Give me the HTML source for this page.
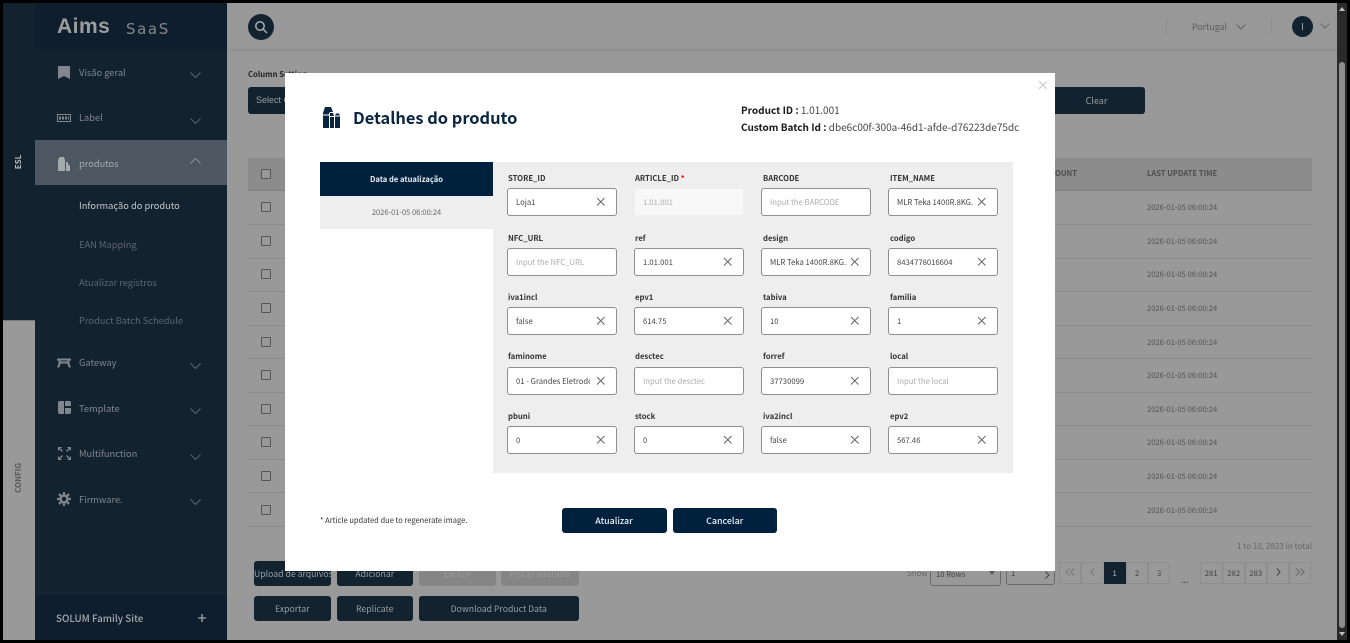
<!DOCTYPE html>
<html><head><meta charset="utf-8"><style>
html,body{margin:0;padding:0;width:1350px;height:643px;overflow:hidden;background:#000}
body{position:relative;font-family:"Liberation Sans","Noto Sans CJK KR",sans-serif}
*{box-sizing:border-box}
#p,#p *{font-family:"Noto Sans CJK KR","Liberation Sans",sans-serif}
.b{position:absolute}
.t{position:absolute;white-space:nowrap;line-height:14px}
.s{font-size:9.3px;color:#7f868d}
.d{font-size:7.6px;color:#535353;left:1147px;margin-top:1px}
.cb{position:absolute;left:261px;width:10px;height:10px;border:1.3px solid #555;border-radius:1px;background:#999}
.ln{position:absolute;left:248px;width:1064px;height:1px;background:#8c8c8c}
.btn{position:absolute;height:25px;border-radius:3px;background:#12222f;color:#9a9fa3;font-size:8.7px;text-align:center;line-height:25px;white-space:nowrap;overflow:hidden}
.dis{background:#858585;color:#9a9a9a}
.pg{position:absolute;top:562px;width:22.4px;height:22.4px;border:1px solid #8e8e8e;font-size:7.7px;color:#444;text-align:center;line-height:21px}
.l{position:absolute;font-size:7.7px;font-weight:700;color:#333;white-space:nowrap;line-height:12px;margin-top:1px}
.i{position:absolute;width:110px;height:28px;background:#fff;border:1px solid #8f8f8f;border-radius:3px;font-size:7.7px;line-height:27px;padding-left:8px;color:#444;white-space:nowrap;overflow:hidden}
.ph{color:#adadad}
.m{position:absolute;height:25px;border-radius:3px;background:#00213e;color:#e8edf1;font-size:8.9px;font-weight:500;text-align:center;line-height:25px}
</style></head><body>
<div id="p">
<div class="b" style="left:3px;top:3px;width:1334px;height:637px;background:#999"></div>
<!-- rail -->
<div class="b" style="left:3px;top:3px;width:32px;height:317px;background:#12222f"></div>
<div class="b" style="left:3px;top:320px;width:32px;height:320px;background:#999;border-top:1px solid #777"></div>
<div class="t" style="left:11px;top:155px;font-size:8px;font-weight:700;color:#b9bdc1;transform:rotate(-90deg);width:16px;text-align:center">ESL</div>
<div class="t" style="left:5px;top:472px;width:28px;text-align:center;font-size:8px;font-weight:700;color:#595959;transform:rotate(-90deg)">CONFIG</div>
<!-- sidebar -->
<div class="b" style="left:35px;top:3px;width:192px;height:637px;background:#12222f"></div>
<div class="b" style="left:35px;top:3px;width:192px;height:46px;background:#0f1e2c"></div>
<div class="b" style="left:35px;top:140px;width:192px;height:45px;background:#4d5761"></div>
<div class="b" style="left:35px;top:595px;width:192px;height:45px;background:#0f1e2c"></div>
<!-- logo -->
<div class="t" style="left:57px;top:15px;font-family:'Liberation Sans',sans-serif;font-size:21px;font-weight:700;color:#9b9d9f;line-height:24px;letter-spacing:.5px">Aims</div>
<div class="t" style="left:126px;top:18px;font-family:'DejaVu Sans',sans-serif;font-size:15px;color:#83878b;line-height:22px;letter-spacing:1.600px">SaaS</div>
<!-- sidebar items -->
<svg class="b" style="left:58px;top:66px" width="12" height="13"><path d="M0 0H12V13L6 10L0 13Z" fill="#7f868d"/></svg>
<div class="t s" style="left:79px;top:65px">Visão geral</div>
<svg class="b" style="left:57px;top:114px" width="14" height="8"><rect x=".5" y=".5" width="13" height="7" fill="none" stroke="#7f868d"/><path d="M2 4h10" stroke="#7f868d" stroke-dasharray="2 1" stroke-width="3"/></svg>
<div class="t s" style="left:79px;top:110px">Label</div>
<svg class="b" style="left:58px;top:156px" width="12" height="15" viewBox="0 0 12 15"><path d="M0 4L1.500 1H6L7 4V15H0Z" fill="#a4a9ad"/><path d="M8 6H10V8L12 10V15H8Z" fill="#a4a9ad"/></svg>
<div class="t" style="left:79px;top:156px;font-size:9.300px;color:#a4a9ad">produtos</div>
<div class="t" style="left:79px;top:198px;font-size:9.300px;color:#c3c6c9">Informação do produto</div>
<div class="t s" style="left:79px;top:237px;color:#5c6670">EAN Mapping</div>
<div class="t s" style="left:79px;top:275px;color:#5c6670">Atualizar registros</div>
<div class="t s" style="left:79px;top:313px;color:#5c6670">Product Batch Schedule</div>
<svg class="b" style="left:57px;top:358px" width="14" height="10" viewBox="0 0 14 10"><path d="M0 1.500H14M2.500 1V6L1 9.500M11.500 1V6L13 9.500M2 4.500H12" fill="none" stroke="#7f868d" stroke-width="2"/></svg>
<div class="t s" style="left:79px;top:355px">Gateway</div>
<svg class="b" style="left:58px;top:401px" width="13" height="13"><path d="M2 0H6V13H2Q0 13 0 11V2Q0 0 2 0ZM7 0H11Q13 0 13 2V5H7ZM7 7H13V11Q13 13 11 13H7Z" fill="#7f868d"/></svg>
<div class="t s" style="left:79px;top:401px">Template</div>
<svg class="b" style="left:58px;top:447px" width="13" height="13" viewBox="0 0 13 13"><g fill="none" stroke="#7f868d" stroke-width="1.300"><path d="M.5 3.500V.5H3.500M.8.800L4.500 4.500M12.500 3.500V.5H9.500M12.200.800L8.500 4.500M.5 9.500V12.500H3.500M.8 12.200L4.500 8.500M12.500 9.500V12.500H9.500M12.200 12.200L8.500 8.500"/></g></svg>
<div class="t s" style="left:79px;top:446px">Multifunction</div>
<svg class="b" style="left:57px;top:492px" width="14" height="14" viewBox="0 0 14 14"><circle cx="7" cy="7" r="3.500" fill="none" stroke="#7f868d" stroke-width="2.600"/><path d="M7 0V14M0 7H14M2 2L12 12M12 2L2 12" stroke="#7f868d" stroke-width="2.200" stroke-dasharray="2.400 9.500 2.400 0"/></svg>
<div class="t s" style="left:79px;top:491.500px">Firmware.</div>
<svg class="b" style="left:190px;top:72px" width="11" height="6"><path d="M.5.500L5.500 5.500L10.500.500" fill="none" stroke="#5c6670"/></svg>
<svg class="b" style="left:190px;top:118px" width="11" height="6"><path d="M.5.500L5.500 5.500L10.500.500" fill="none" stroke="#5c6670"/></svg>
<svg class="b" style="left:190px;top:158px" width="11" height="6"><path d="M.5 5.500L5.500.500L10.500 5.500" fill="none" stroke="#8a9096"/></svg>
<svg class="b" style="left:190px;top:363px" width="11" height="6"><path d="M.5.500L5.500 5.500L10.500.500" fill="none" stroke="#5c6670"/></svg>
<svg class="b" style="left:190px;top:408px" width="11" height="6"><path d="M.5.500L5.500 5.500L10.500.500" fill="none" stroke="#5c6670"/></svg>
<svg class="b" style="left:190px;top:454px" width="11" height="6"><path d="M.5.500L5.500 5.500L10.500.500" fill="none" stroke="#5c6670"/></svg>
<svg class="b" style="left:190px;top:499px" width="11" height="6"><path d="M.5.500L5.500 5.500L10.500.500" fill="none" stroke="#5c6670"/></svg>
<div class="t" style="left:56px;top:611px;font-size:9.800px;font-weight:500;color:#a4a9ad">SOLUM Family Site</div>
<svg class="b" style="left:198px;top:614px" width="8" height="8"><path d="M4 0V8M0 4H8" stroke="#a4a9ad" stroke-width="1.300"/></svg>
<!-- topbar -->
<div class="b" style="left:227px;top:3px;width:1110px;height:46px;background:#989898;box-shadow:0 1px 3px rgba(0,0,0,.12)"></div>
<div class="b" style="left:248px;top:14px;width:26px;height:26px;border-radius:50%;background:#12222f"></div>
<svg class="b" style="left:254px;top:20px" width="14" height="14"><circle cx="6" cy="6" r="4.200" fill="none" stroke="#a9adb0" stroke-width="1.500"/><path d="M9 9L13 13" stroke="#a9adb0" stroke-width="1.500"/></svg>
<div class="b" style="left:1166px;top:19px;width:1px;height:15px;background:#8e8e8e"></div>
<div class="b" style="left:1271px;top:19px;width:1px;height:15px;background:#8e8e8e"></div>
<div class="t" style="left:1192px;top:20px;font-size:8.800px;color:#5d5d5d">Portugal</div>
<svg class="b" style="left:1236px;top:24px" width="10" height="6"><path d="M.5.500L5 5L9.500.500" fill="none" stroke="#666" stroke-width="1.200"/></svg>
<div class="b" style="left:1292px;top:16px;width:21px;height:21px;border-radius:50%;background:#12222f;color:#a9adb0;font-size:9.500px;text-align:center;line-height:21px">I</div>
<svg class="b" style="left:1320px;top:23px" width="10" height="6"><path d="M.5.500L5 5L9.500.500" fill="none" stroke="#6d6d6d" stroke-width="1.200"/></svg>
<!-- filters -->
<div class="t" style="left:248px;top:68px;font-size:7.700px;font-weight:700;color:#222">Column Setting</div>
<div class="b" style="left:248px;top:87px;width:60px;height:27px;background:#12222f;border-radius:3px"></div>
<div class="t" style="left:256px;top:93px;font-size:9px;color:#9a9fa3;font-family:'Liberation Sans'">Select Column</div>
<div class="btn" style="left:1048px;top:87px;width:97px;height:27px;line-height:27px;font-size:9px">Clear</div>
<!-- table -->
<div class="b" style="left:248px;top:158px;width:1064px;height:33px;background:#8c8c8c;border-bottom:1px solid #7f7f7f"></div>
<div class="t" style="left:1055px;top:167px;font-size:7.600px;font-weight:700;color:#4d4d4d">OUNT</div>
<div class="t" style="left:1147px;top:167px;font-size:7.600px;font-weight:700;color:#4d4d4d">LAST UPDATE TIME</div>
<div class="cb" style="top:169px"></div>
<div class="cb" style="top:202px"></div><div class="cb" style="top:236px"></div><div class="cb" style="top:269px"></div><div class="cb" style="top:303px"></div><div class="cb" style="top:337px"></div><div class="cb" style="top:370px"></div><div class="cb" style="top:404px"></div><div class="cb" style="top:437px"></div><div class="cb" style="top:471px"></div><div class="cb" style="top:505px"></div>
<div class="ln" style="top:224px"></div><div class="ln" style="top:258px"></div><div class="ln" style="top:291px"></div><div class="ln" style="top:325px"></div><div class="ln" style="top:358px"></div><div class="ln" style="top:392px"></div><div class="ln" style="top:425px"></div><div class="ln" style="top:459px"></div><div class="ln" style="top:492px"></div><div class="ln" style="top:526px"></div>
<div class="t d" style="top:200px">2026-01-05 06:00:24</div><div class="t d" style="top:234px">2026-01-05 06:00:24</div><div class="t d" style="top:267px">2026-01-05 06:00:24</div><div class="t d" style="top:301px">2026-01-05 06:00:24</div><div class="t d" style="top:335px">2026-01-05 06:00:24</div><div class="t d" style="top:368px">2026-01-05 06:00:24</div><div class="t d" style="top:402px">2026-01-05 06:00:24</div><div class="t d" style="top:435px">2026-01-05 06:00:24</div><div class="t d" style="top:469px">2026-01-05 06:00:24</div><div class="t d" style="top:503px">2026-01-05 06:00:24</div>
<!-- bottom buttons -->
<div class="btn" style="left:254px;top:561px;width:76.500px">Upload de arquivos</div>
<div class="btn" style="left:336.500px;top:561px;width:76.500px">Adicionar</div>
<div class="btn dis" style="left:419px;top:561px;width:77px">Excluir</div>
<div class="btn dis" style="left:501px;top:561px;width:77.500px">Piscar liderado</div>
<div class="btn" style="left:254px;top:596px;width:76.500px">Exportar</div>
<div class="btn" style="left:336.500px;top:596px;width:76.500px">Replicate</div>
<div class="btn" style="left:419px;top:596px;width:159.500px">Download Product Data</div>
<!-- pagination -->
<div class="t" style="right:38px;top:540px;font-size:8.100px;color:#666">1 to 10, 2823 in total</div>
<div class="t" style="left:907px;top:567px;font-size:7.900px;color:#666">Show</div>
<div class="b" style="left:930px;top:560px;width:70.500px;height:26px;border:1px solid #6a6a6a;border-radius:3px"></div>
<div class="t" style="left:936px;top:568px;font-size:7.700px;color:#444">10 Rows</div>
<svg class="b" style="left:989px;top:571px" width="6" height="4"><path d="M0 0H6L3 4Z" fill="#555"/></svg>
<div class="b" style="left:1006px;top:560px;width:49px;height:24.500px;border:1px solid #6a6a6a;border-radius:3px"></div>
<div class="t" style="left:1011px;top:567px;font-size:7.700px;color:#444">1</div>
<svg class="b" style="left:1045px;top:571px" width="5" height="8"><path d="M.5.500L4 4L.5 7.500" fill="none" stroke="#444"/></svg>
<div class="pg" style="left:1059px;color:#777"><svg width="10" height="8" viewBox="0 0 10 8"><path d="M4.500.500L1 4L4.500 7.500M9 .500L5.500 4L9 7.500" fill="none" stroke="#777"/></svg></div>
<div class="pg" style="left:1081px"><svg width="5" height="8"><path d="M4 .500L1 4L4 7.500" fill="none" stroke="#777"/></svg></div>
<div class="pg" style="left:1103.500px;background:#12222f;color:#b5b9bc;border-color:#12222f">1</div>
<div class="pg" style="left:1126px">2</div>
<div class="pg" style="left:1148px">3</div>
<div class="t" style="left:1181px;top:573px;font-size:9px;color:#444">...</div>
<div class="pg" style="left:1200px">281</div>
<div class="pg" style="left:1222.500px">282</div>
<div class="pg" style="left:1244.500px">283</div>
<div class="pg" style="left:1267px"><svg width="5" height="8"><path d="M1 .500L4 4L1 7.500" fill="none" stroke="#444"/></svg></div>
<div class="pg" style="left:1289px"><svg width="10" height="8" viewBox="0 0 10 8"><path d="M1 .500L4.500 4L1 7.500M5.500 .500L9 4L5.500 7.500" fill="none" stroke="#666"/></svg></div>
<!-- scrollbar -->
<div class="b" style="left:1337px;top:3px;width:10px;height:637px;background:#2a2a2a"></div>
<div class="b" style="left:1339px;top:62px;width:6px;height:566px;background:#8e8e8e;border-radius:3px"></div>
<svg class="b" style="left:1339px;top:7px" width="6" height="4"><path d="M3 0L6 4H0Z" fill="#bdbdbd"/></svg>
<svg class="b" style="left:1339px;top:632px" width="6" height="4"><path d="M0 0H6L3 4Z" fill="#bdbdbd"/></svg>
<!-- modal -->
<div class="b" style="left:285px;top:73px;width:770px;height:498px;background:#fff"></div>
<svg class="b" style="left:1039px;top:81px" width="8" height="8"><path d="M0 0L8 8M8 0L0 8" stroke="#c4c4c4"/></svg>
<svg class="b" style="left:323px;top:107px" width="17" height="21" viewBox="0 0 17 21"><path d="M0 6L2 0H8L10 5H7L5.500 7.500H0Z" fill="#0a2540"/><path d="M0 8.500H6V21H0Z" fill="#0a2540"/><path d="M7 6H10L11 9H7ZM7 10H11V21H7ZM12 9.500H17V21H12ZM12 8.500L13 6.500H16L17 8.500Z" fill="#0a2540"/></svg>
<div class="t" style="left:353px;top:106px;font-size:16.400px;font-weight:700;color:#0a2540;line-height:22px">Detalhes do produto</div>
<div class="t" style="left:741px;top:103px;font-size:10px;font-weight:700;color:#1a1a1a">Product ID : <span style="font-weight:400;color:#444">1.01.001</span></div>
<div class="t" style="left:741px;top:120px;font-size:10px;font-weight:700;color:#1a1a1a">Custom Batch Id : <span style="font-weight:400;color:#444">dbe6c00f-300a-46d1-afde-d76223de75dc</span></div>
<div class="b" style="left:320px;top:162px;width:173px;height:34px;background:#00213e;color:#e8edf1;font-size:7.600px;font-weight:700;text-align:center;line-height:36px">Data de atualização</div>
<div class="b" style="left:320px;top:196px;width:173px;height:33px;background:#eee;color:#666;font-size:7.500px;text-align:center;line-height:33px">2026-01-05 06:00:24</div>
<div class="b" style="left:493px;top:162px;width:520px;height:311px;background:#eee"></div>
<!-- labels -->
<div class="l" style="left:508px;top:172px">STORE_ID</div><div class="l" style="left:635px;top:172px">ARTICLE_ID <span style="color:#e00">*</span></div><div class="l" style="left:763px;top:172px">BARCODE</div><div class="l" style="left:890px;top:172px">ITEM_NAME</div>
<div class="l" style="left:508px;top:232px">NFC_URL</div><div class="l" style="left:635px;top:232px">ref</div><div class="l" style="left:763px;top:232px">design</div><div class="l" style="left:890px;top:232px">codigo</div>
<div class="l" style="left:508px;top:291px">iva1incl</div><div class="l" style="left:635px;top:291px">epv1</div><div class="l" style="left:763px;top:291px">tabiva</div><div class="l" style="left:890px;top:291px">familia</div>
<div class="l" style="left:508px;top:350px">faminome</div><div class="l" style="left:635px;top:350px">desctec</div><div class="l" style="left:763px;top:350px">forref</div><div class="l" style="left:890px;top:350px">local</div>
<div class="l" style="left:508px;top:410px">pbuni</div><div class="l" style="left:635px;top:410px">stock</div><div class="l" style="left:763px;top:410px">iva2incl</div><div class="l" style="left:890px;top:410px">epv2</div>
<!-- inputs -->
<div class="i" style="left:507px;top:188px">Loja1</div>
<div class="i ph" style="left:634px;top:188px;background:#f8f8f8;border-color:#f0f0f0">1.01.001</div>
<div class="i ph" style="left:761px;top:188px">Input the BARCODE</div>
<div class="i" style="left:888px;top:188px"><span style="display:inline-block;width:78px;overflow:hidden;vertical-align:top">MLR Teka 1400R.8KG.</span></div>
<div class="i ph" style="left:507px;top:248px">Input the NFC_URL</div>
<div class="i" style="left:634px;top:248px">1.01.001</div>
<div class="i" style="left:761px;top:248px"><span style="display:inline-block;width:78px;overflow:hidden;vertical-align:top">MLR Teka 1400R.8KG.</span></div>
<div class="i" style="left:888px;top:248px">8434778016604</div>
<div class="i" style="left:507px;top:307px">false</div>
<div class="i" style="left:634px;top:307px">614.75</div>
<div class="i" style="left:761px;top:307px">10</div>
<div class="i" style="left:888px;top:307px">1</div>
<div class="i" style="left:507px;top:367px"><span style="display:inline-block;width:74px;overflow:hidden;vertical-align:top">01 - Grandes Eletrodomésticos</span></div>
<div class="i ph" style="left:634px;top:367px">Input the desctec</div>
<div class="i" style="left:761px;top:367px">37730099</div>
<div class="i ph" style="left:888px;top:367px">Input the local</div>
<div class="i" style="left:507px;top:426px">0</div>
<div class="i" style="left:634px;top:426px">0</div>
<div class="i" style="left:761px;top:426px">false</div>
<div class="i" style="left:888px;top:426px">567.46</div>
<!-- clear icons -->
<svg class="b" style="left:0;top:0;pointer-events:none" width="1350" height="643"><g stroke="#666" stroke-width="1" fill="none">
<path d="M597 198l7.500 7.500m0-7.500l-7.500 7.500M978 198l7.500 7.500m0-7.500l-7.500 7.500"/>
<path d="M724 258l7.500 7.500m0-7.500l-7.500 7.500M851 258l7.500 7.500m0-7.500l-7.500 7.500M978 258l7.500 7.500m0-7.500l-7.500 7.500"/>
<path d="M597 317l7.500 7.500m0-7.500l-7.500 7.500M724 317l7.500 7.500m0-7.500l-7.500 7.500M851 317l7.500 7.500m0-7.500l-7.500 7.500M978 317l7.500 7.500m0-7.500l-7.500 7.500"/>
<path d="M597 377l7.500 7.500m0-7.500l-7.500 7.500M851 377l7.500 7.500m0-7.500l-7.500 7.500"/>
<path d="M597 436l7.500 7.500m0-7.500l-7.500 7.500M724 436l7.500 7.500m0-7.500l-7.500 7.500M851 436l7.500 7.500m0-7.500l-7.500 7.500M978 436l7.500 7.500m0-7.500l-7.500 7.500"/>
</g></svg>
<div class="t" style="left:320px;top:514px;font-size:7.500px;color:#333">* Article updated due to regenerate image.</div>
<div class="m" style="left:561.500px;top:508px;width:105px">Atualizar</div>
<div class="m" style="left:672.500px;top:508px;width:104.500px">Cancelar</div>
</div>
</body></html>
